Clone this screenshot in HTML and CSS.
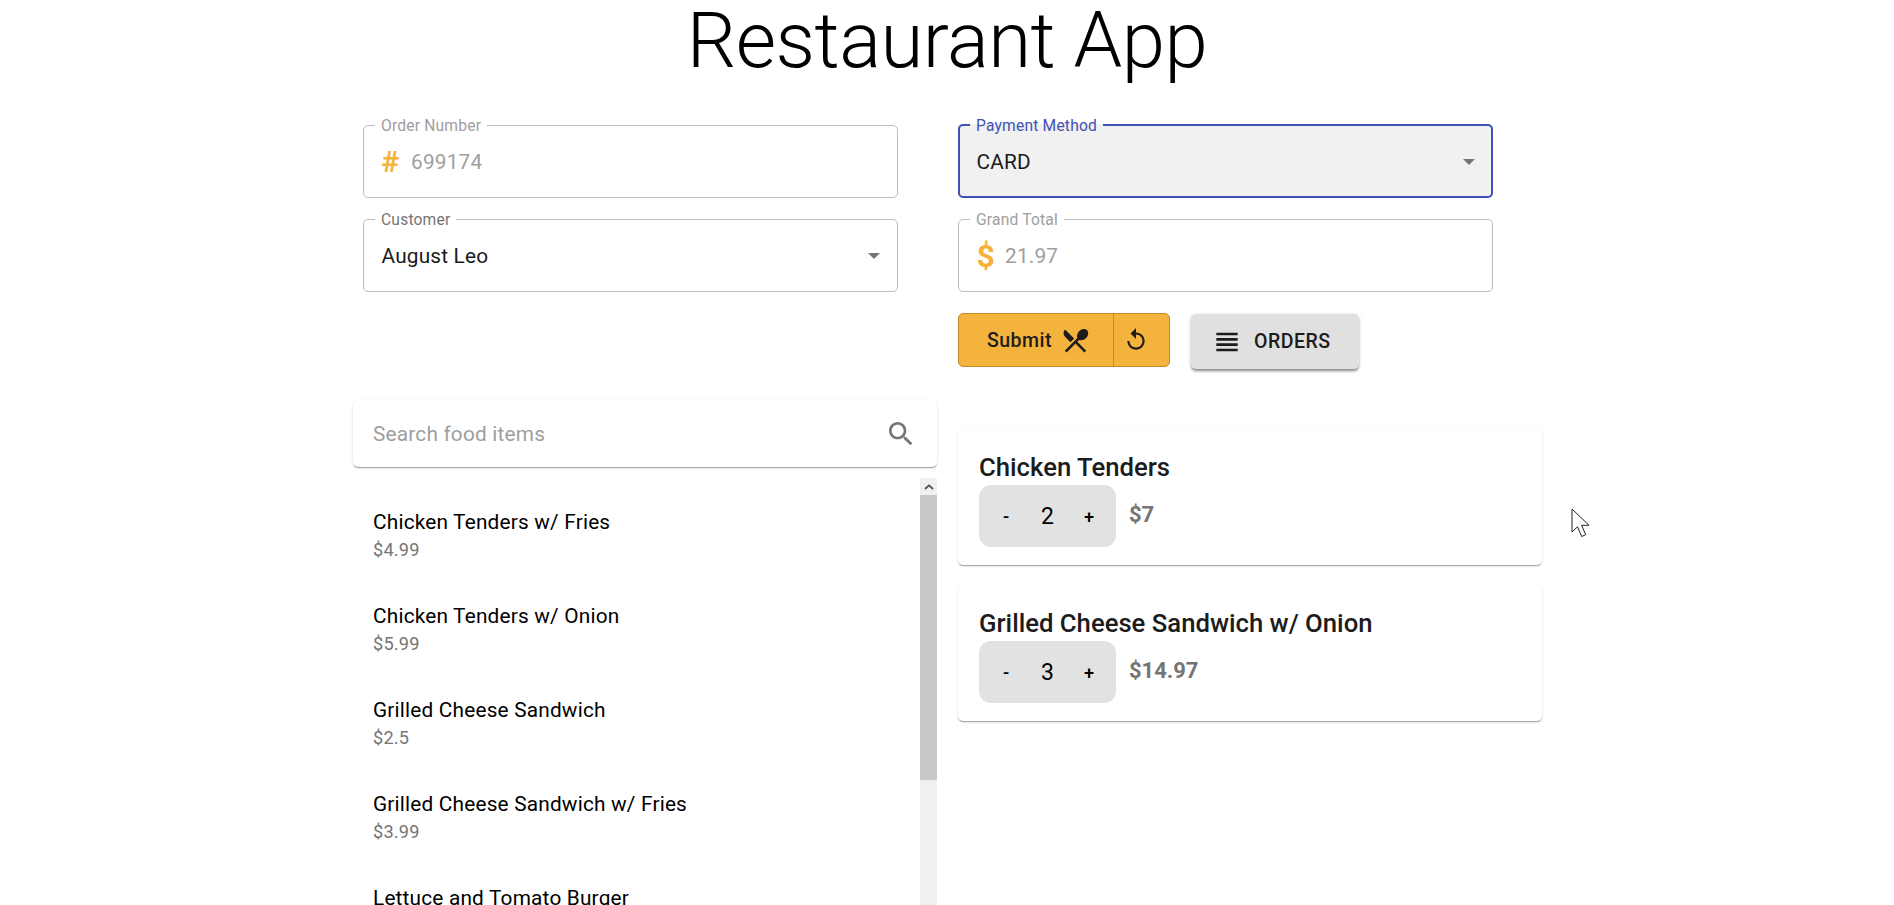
FILE: index.html
```html
<!DOCTYPE html>
<html lang="en">
<head>
    <meta charset="UTF-8">
    <meta name="viewport" content="width=device-width, initial-scale=1.0">
    <title>Restaurant App</title>
    <link rel="stylesheet" href="styles.css">
</head>
<body>
    <h1 class="title">Restaurant App</h1>

    <main class="container">
        <form class="order-form">
            <div class="form-col">
                <fieldset class="field">
                    <legend>Order Number</legend>
                    <div class="field-inner">
                        <span class="adornment hash">#</span>
                        <span class="value muted">699174</span>
                    </div>
                </fieldset>
                <fieldset class="field label-dark">
                    <legend>Customer</legend>
                    <div class="field-inner">
                        <span class="value">August Leo</span>
                        <span class="caret"></span>
                    </div>
                </fieldset>
            </div>
            <div class="form-col">
                <fieldset class="field focused">
                    <legend>Payment Method</legend>
                    <div class="field-inner">
                        <span class="value">CARD</span>
                        <span class="caret"></span>
                    </div>
                </fieldset>
                <fieldset class="field">
                    <legend>Grand Total</legend>
                    <div class="field-inner">
                        <span class="adornment dollar">$</span>
                        <span class="value muted">21.97</span>
                    </div>
                </fieldset>
                <div class="actions">
                    <div class="button-group">
                        <button type="button" class="btn-submit">
                            Submit
                            <svg class="icon" viewBox="0 0 24 24"><path d="M8.1 13.34l2.83-2.83L3.91 3.5c-1.56 1.56-1.56 4.09 0 5.66l4.19 4.18zm6.78-1.81c1.53.71 3.68.21 5.27-1.38 1.91-1.91 2.28-4.65.81-6.12-1.46-1.46-4.2-1.1-6.12.81-1.59 1.59-2.09 3.74-1.38 5.27L3.7 19.87l1.41 1.41L12 14.41l6.88 6.88 1.41-1.41L13.41 13l1.47-1.47z"/></svg>
                        </button>
                        <button type="button" class="btn-reset" aria-label="Reset">
                            <svg class="icon" viewBox="0 0 24 24"><path d="M12 5V1L7 6l5 5V7c3.31 0 6 2.69 6 6s-2.69 6-6 6-6-2.69-6-6H4c0 4.42 3.58 8 8 8s8-3.58 8-8-3.58-8-8-8z"/></svg>
                        </button>
                    </div>
                    <button type="button" class="btn-orders">
                        <svg class="icon" viewBox="0 0 24 24"><path d="M4 15h16v-2H4v2zm0 4h16v-2H4v2zm0-8h16V9H4v2zm0-6v2h16V5H4z"/></svg>
                        Orders
                    </button>
                </div>
            </div>
        </form>

        <div class="food-area">
            <section class="menu-col">
                <div class="paper search">
                    <span class="search-text">Search food items</span>
                    <svg class="search-icon" viewBox="0 0 24 24"><path d="M15.5 14h-.79l-.28-.27C15.41 12.59 16 11.11 16 9.5 16 5.91 13.09 3 9.5 3S3 5.91 3 9.5 5.91 16 9.5 16c1.61 0 3.09-.59 4.23-1.57l.27.28v.79l5 4.99L20.49 19l-4.99-5zm-6 0C7.01 14 5 11.99 5 9.5S7.01 5 9.5 5 14 7.01 14 9.5 11.99 14 9.5 14z"/></svg>
                </div>
                <div class="list-wrap">
                    <ul class="food-list">
                        <li><div class="food-name">Chicken Tenders w/ Fries</div><div class="food-price">$4.99</div></li>
                        <li><div class="food-name">Chicken Tenders w/ Onion</div><div class="food-price">$5.99</div></li>
                        <li><div class="food-name">Grilled Cheese Sandwich</div><div class="food-price">$2.5</div></li>
                        <li><div class="food-name">Grilled Cheese Sandwich w/ Fries</div><div class="food-price">$3.99</div></li>
                        <li><div class="food-name">Lettuce and Tomato Burger</div><div class="food-price">$1.99</div></li>
                    </ul>
                    <div class="scrollbar">
                        <div class="scroll-up"><svg viewBox="0 0 10 6"><path d="M1 5l4-3.600L9 5" fill="none" stroke="#505050" stroke-width="1.7"/></svg></div>
                        <div class="scroll-thumb"></div>
                    </div>
                </div>
            </section>

            <section class="cart-col">
                <div class="paper cart-item">
                    <h2 class="cart-name">Chicken Tenders</h2>
                    <div class="cart-row">
                        <div class="stepper"><button type="button">-</button><span class="qty">2</span><button type="button">+</button></div>
                        <span class="cart-price">$7</span>
                    </div>
                </div>
                <div class="paper cart-item">
                    <h2 class="cart-name">Grilled Cheese Sandwich w/ Onion</h2>
                    <div class="cart-row">
                        <div class="stepper"><button type="button">-</button><span class="qty">3</span><button type="button">+</button></div>
                        <span class="cart-price">$14.97</span>
                    </div>
                </div>
            </section>
        </div>
    </main>

    <svg class="cursor" viewBox="0 0 18 29"><path d="M1 1v23l5.500-5.200 4.200 9.700 4-1.800-4.100-9.400h7.400z" fill="#fff" stroke="#222" stroke-width="1"/></svg>
</body>
</html>
```

FILE: styles.css
```css
* {
    box-sizing: border-box;
}
html, body {
    height: 100%;
}
body {
    margin: 0;
    overflow: hidden;
    background-color: #fff;
    color: #000;
    font-family: 'Roboto', sans-serif;
    font-size: 20.8px;
    letter-spacing: 0.00938em;
}
button {
    font-family: inherit;
    border: none;
    cursor: pointer;
}

.title {
    margin: 0;
    height: 116px;
    font-size: 78px;
    line-height: 82px;
    font-weight: 300;
    letter-spacing: -0.007em;
    text-align: center;
}

.container {
    width: 1190px;
    margin-left: 353px;
}

.order-form {
    display: grid;
    grid-template-columns: 535px 535px;
    column-gap: 60px;
    padding-left: 10px;
}
.form-col {
    display: flex;
    flex-direction: column;
    gap: 12px;
}
.field {
    height: 82px;
    min-width: 0;
    margin: 0;
    padding: 0 18px 0 17.5px;
    border: 1px solid #bdbdbd;
    border-radius: 5px;
}
.field legend {
    height: 18px;
    margin-left: -6.5px;
    padding: 0 6px;
    font-size: 15.6px;
    line-height: 20px;
    color: #9e9e9e;
}
.field.label-dark legend {
    color: #757575;
}
.field.focused {
    border: 2px solid #3f51b5;
    background-color: #f1f1f1;
    padding: 0 17px 0 16.5px;
}
.field.focused legend {
    color: #3f51b5;
}
.field-inner {
    display: flex;
    align-items: center;
    height: 55px;
}
.value {
    flex: 1;
    line-height: 24px;
    color: #1a1a1a;
}
.value.muted {
    color: #9e9e9e;
}
.adornment {
    color: #f4b33d;
    font-weight: 700;
    line-height: 24px;
}
.hash {
    font-size: 30px;
    width: 29.5px;
}
.dollar {
    font-size: 32px;
    width: 28.5px;
}
.caret {
    width: 0;
    height: 0;
    margin-right: -1px;
    border-left: 6.5px solid transparent;
    border-right: 6.5px solid transparent;
    border-top: 6.5px solid #757575;
}

.actions {
    display: flex;
    align-items: flex-start;
    gap: 21px;
    margin-top: 9px;
}
.button-group {
    display: flex;
    height: 54px;
    background-color: #f4b33d;
    border: 1px solid #c38a2a;
    border-radius: 5px;
}
.button-group button {
    display: flex;
    align-items: center;
    justify-content: center;
    background: transparent;
    color: #1c1c1c;
    font-size: 19.5px;
    font-weight: 500;
    letter-spacing: 0.5px;
}
.btn-submit {
    width: 155px;
    gap: 8px;
    padding: 0 0 0 6px;
    border-right: 1px solid #c38a2a;
}
.btn-reset {
    width: 55px;
    padding: 0 12px 0 0;
}
.icon {
    width: 26px;
    height: 26px;
    fill: #1c1c1c;
}
.btn-submit .icon {
    width: 31px;
    height: 31px;
}
.btn-orders {
    display: flex;
    align-items: center;
    gap: 11px;
    width: 168px;
    height: 55px;
    margin-top: 1px;
    padding: 0 0 0 20px;
    background-color: #e0e0e0;
    color: #1c1c1c;
    font-size: 19.5px;
    font-weight: 500;
    letter-spacing: 0.5px;
    text-transform: uppercase;
    border-radius: 5px;
    box-shadow: 0 3px 3px -1px rgba(0, 0, 0, 0.3), 0 2px 2px 0 rgba(0, 0, 0, 0.14), 0 1px 5px 0 rgba(0, 0, 0, 0.12);
}
.btn-orders .icon {
    width: 32px;
    height: 32px;
}

.food-area {
    display: grid;
    grid-template-columns: 584px 584px;
    column-gap: 21px;
    margin-top: 31px;
}
.paper {
    background-color: #fff;
    border-radius: 5px;
    box-shadow: 0 2px 1px -1px rgba(0, 0, 0, 0.2), 0 1px 1px 0 rgba(0, 0, 0, 0.14), 0 1px 3px 0 rgba(0, 0, 0, 0.12);
}
.search {
    display: flex;
    align-items: center;
    justify-content: space-between;
    height: 67px;
    padding: 0 20px;
}
.search-text {
    color: #9e9e9e;
}
.search-icon {
    width: 32px;
    height: 32px;
    fill: #757575;
}
.list-wrap {
    display: flex;
    height: 500px;
    margin-top: 11px;
    overflow: hidden;
}
.food-list {
    flex: 1;
    list-style: none;
    margin: 0;
    padding: 9px 0 0 20px;
}
.food-list li {
    height: 94px;
    padding-top: 21px;
}
.food-name {
    line-height: 28px;
}
.food-price {
    font-size: 18.2px;
    letter-spacing: 0.01071em;
    line-height: 28px;
    color: #757575;
}
.scrollbar {
    width: 17px;
    background-color: #f0f0f0;
}
.scroll-up {
    display: flex;
    align-items: center;
    justify-content: center;
    height: 17px;
}
.scroll-up svg {
    width: 10px;
    height: 6px;
}
.scroll-thumb {
    height: 285px;
    background-color: #c8c8c8;
}

.cart-col {
    display: flex;
    flex-direction: column;
    gap: 20px;
    padding-top: 29px;
}
.cart-item {
    height: 136px;
    padding: 20px 21px 0;
}
.cart-name {
    margin: 0;
    font-size: 25.7px;
    line-height: 36px;
    font-weight: 500;
    letter-spacing: 0;
    color: #1c1c1c;
}
.cart-row {
    display: flex;
    align-items: flex-start;
    gap: 13px;
}
.stepper {
    display: flex;
    align-items: center;
    justify-content: space-between;
    width: 137px;
    height: 62px;
    padding: 0 8px;
    background-color: #e2e2e2;
    border-radius: 12px;
}
.stepper button {
    width: 38px;
    height: 62px;
    padding: 0;
    background: transparent;
    color: #000;
    font-size: 18.2px;
    font-weight: 500;
}
.qty {
    font-size: 23px;
    color: #000;
}
.cart-price {
    font-size: 22px;
    font-weight: 700;
    letter-spacing: 0;
    line-height: 30px;
    padding-top: 15px;
    color: #757575;
}

.cursor {
    position: absolute;
    left: 1571px;
    top: 508px;
    width: 18px;
    height: 29px;
}
```
